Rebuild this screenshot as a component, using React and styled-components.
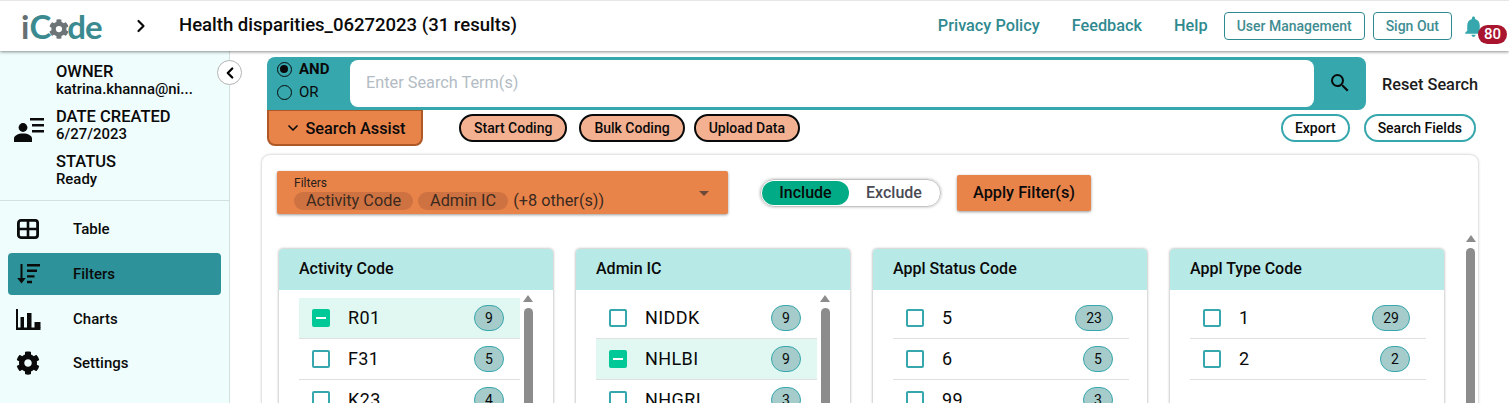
import React from 'react';
import styled, { createGlobalStyle } from 'styled-components';
import { FaCog } from 'react-icons/fa';
import { MdNotifications, MdSearch } from 'react-icons/md';
import { ChevronDown, ChevronLeft, ChevronRight } from 'lucide-react';

const GlobalStyle = createGlobalStyle`
  html, body {
    margin: 0;
    padding: 0;
    background: #fff;
    font-family: Roboto, "Liberation Sans", sans-serif;
    color: #0a0a0a;
  }
  * {
    box-sizing: border-box;
  }
`;

const Page = styled.div`
  display: flex;
  flex-direction: column;
  width: 1509px;
  height: 403px;
  overflow: hidden;
`;

const Header = styled.header`
  position: relative;
  z-index: 2;
  display: flex;
  align-items: center;
  flex: 0 0 51px;
  padding: 0 14px 0 21px;
  background: #fff;
  border-top: 1px solid #e6e6e6;
  box-shadow: 0 1px 3px rgba(0, 0, 0, 0.45);
`;

const Logo = styled.div`
  display: flex;
  align-items: center;
  width: 110px;
  font-family: Lato, sans-serif;
  font-size: 33px;
  font-weight: 700;
  line-height: 40px;
  letter-spacing: -1px;
  color: #3a8a90;
`;

const LogoI = styled.span`
  margin-right: 1px;
  color: #666f73;
`;

const LogoGear = styled.svg`
  width: 20px;
  height: 20px;
  margin: 5px -2px 0 -1px;
`;

const Crumb = styled.div`
  display: flex;
  width: 48px;
`;

const Title = styled.h1`
  flex: 1;
  margin: 0 0 2px;
  font-size: 18.55px;
  font-weight: 500;
`;

const HeaderLink = styled.a`
  margin: 0 ${({ $last }) => ($last ? 0 : 32)}px 2px 0;
  font-size: 16.3px;
  font-weight: 500;
  color: #2f8a90;
`;

const OutlineButton = styled.button`
  height: 28px;
  margin-left: ${({ $gap }) => $gap}px;
  padding: 0 12px;
  border: 1px solid #2f8a90;
  border-radius: 4px;
  background: #fff;
  font: 500 14px Roboto, sans-serif;
  color: #3f8d92;
`;

const Bell = styled.div`
  position: relative;
  display: flex;
  width: 34px;
  margin-left: 9px;
  color: #35a7ad;
`;

const BellBadge = styled.span`
  position: absolute;
  top: 11px;
  left: 17px;
  width: 29px;
  height: 19px;
  border-radius: 10px;
  background: #a9152f;
  font-size: 15px;
  font-weight: 500;
  line-height: 19px;
  text-align: center;
  color: #fff;
`;

const Body = styled.div`
  display: flex;
  flex: 1;
  min-height: 0;
`;

const Sidebar = styled.aside`
  position: relative;
  flex: 0 0 230px;
  background: #f0fdfd;
  border-right: 1px solid #d3e0e2;
`;

const CollapseButton = styled.button`
  position: absolute;
  top: 9px;
  right: -13px;
  display: flex;
  align-items: center;
  justify-content: center;
  width: 25px;
  height: 25px;
  padding: 0;
  border: 1px solid #b5b5b5;
  border-radius: 50%;
  background: #fff;
  color: #000;
`;

const Info = styled.div`
  display: flex;
  align-items: center;
  height: 150px;
  padding: 0 0 0 14px;
  border-bottom: 1px solid #d3e0e2;
`;

const InfoIcon = styled.svg`
  flex: 0 0 31px;
  height: 24px;
  margin: 8px 11px 0 0;
`;

const InfoList = styled.dl`
  display: flex;
  flex-direction: column;
  gap: 9px;
  margin: 0;
  font-size: 16px;
  line-height: 18px;
`;

const InfoName = styled.dt`
  height: 18px;
  font-size: 16.5px;
  font-weight: 500;
`;

const InfoValue = styled.dd`
  margin: -1px 0 1px;
  height: 18px;
  font-size: 14.9px;
  font-weight: 500;
`;

const Nav = styled.nav`
  display: flex;
  flex-direction: column;
  gap: 3px;
  padding: 7px 8px 0;
`;

const NavItem = styled.div`
  display: flex;
  align-items: center;
  height: 42px;
  padding-left: 8px;
  border-radius: 4px;
  background: ${({ $active }) => ($active ? '#2d9299' : 'transparent')};
  font-size: 15px;
  font-weight: 500;
  &:last-child {
    margin-top: -1px;
  }
`;

const NavIcon = styled.span`
  display: flex;
  width: 57px;
`;

const Main = styled.main`
  flex: 1;
  min-width: 0;
  padding: 6px 31px 0 37px;
`;

const SearchRow = styled.div`
  display: flex;
  align-items: center;
`;

const SearchBar = styled.div`
  display: flex;
  align-items: center;
  flex: 0 0 1099px;
  height: 53px;
  padding: 3px 0 3px 10px;
  background: #35a7ad;
  border-radius: 8px 8px 8px 0;
`;

const Operators = styled.div`
  display: flex;
  flex-direction: column;
  gap: 5px;
  flex: 0 0 73px;
  margin-top: -6px;
`;

const Operator = styled.label`
  display: flex;
  align-items: center;
  gap: 7px;
  height: 18px;
  font-size: 15px;
  font-weight: ${({ $on }) => ($on ? 700 : 400)};
`;

const Radio = styled.span`
  position: relative;
  width: 15px;
  height: 15px;
  border: 1.5px solid #0a0a0a;
  border-radius: 50%;
  &::after {
    content: '';
    display: ${({ $on }) => ($on ? 'block' : 'none')};
    width: 8px;
    height: 8px;
    margin: 2px;
    border-radius: 50%;
    background: #0a0a0a;
  }
`;

const SearchInput = styled.div`
  flex: 1;
  display: flex;
  align-items: center;
  align-self: stretch;
  padding: 0 0 2px 16px;
  background: #fff;
  border-radius: 8px;
  font-size: 16.3px;
  color: #b3bcc4;
`;

const SearchIcon = styled.div`
  display: flex;
  justify-content: center;
  flex: 0 0 52px;
  margin-top: -2px;
  color: #0a0a0a;
`;

const ResetSearch = styled.span`
  margin: 2px 0 0 16px;
  font-size: 16.3px;
  font-weight: 500;
  white-space: nowrap;
  color: #1c1c1c;
`;

const ActionRow = styled.div`
  display: flex;
  align-items: flex-start;
`;

const SearchAssist = styled.button`
  display: flex;
  align-items: center;
  justify-content: center;
  gap: 4px;
  width: 156px;
  height: 36px;
  margin-right: 36px;
  padding: 1px 0 0 1px;
  border: 2px solid #ae5826;
  border-top-width: 1px;
  border-radius: 0 0 8px 8px;
  background: #e8834a;
  font: 500 16.3px Roboto, sans-serif;
  color: #0a0a0a;
`;

const Pill = styled.button`
  height: 28px;
  margin: 4px ${({ $gap }) => $gap}px 0 0;
  padding: 0 13px;
  border: 2px solid #0a0a0a;
  border-radius: 14px;
  background: #f4b191;
  font: 500 14px Roboto, sans-serif;
  color: #0a0a0a;
`;

const ExportGroup = styled.div`
  display: flex;
  gap: 14px;
  margin: 4px 2px 0 auto;
`;

const TealPill = styled.button`
  height: 28px;
  padding: 0 12px;
  border: 2px solid #35a7ad;
  border-radius: 14px;
  background: #fff;
  font: 500 14px Roboto, sans-serif;
  color: #0a0a0a;
`;

const Panel = styled.section`
  display: flex;
  flex-direction: column;
  gap: 35px;
  margin: 9px 0 0 -5px;
  height: 300px;
  padding: 16px 3px 0 15px;
  border-radius: 8px;
  box-shadow: 0 0 3px rgba(0, 0, 0, 0.3);
`;

const FilterBar = styled.div`
  display: flex;
  align-items: center;
`;

const FilterSelect = styled.div`
  position: relative;
  flex: 0 0 451px;
  height: 43px;
  margin-right: 32px;
  padding: 6px 17px;
  background: #e8834a;
  border-radius: 2px;
  box-shadow: 0 1px 3px rgba(0, 0, 0, 0.4);
`;

const SelectLabel = styled.div`
  margin-bottom: 3px;
  font-size: 12px;
  line-height: 12px;
  color: #2a2018;
`;

const SelectValues = styled.div`
  display: flex;
  align-items: center;
  gap: 5px;
  font-size: 16.3px;
  line-height: 18px;
  color: #3a2a20;
`;

const SelectChip = styled.span`
  padding: 0 12px;
  border-radius: 9px;
  background: #cf7241;
`;

const SelectArrow = styled.span`
  position: absolute;
  top: 20px;
  right: 19px;
  border-left: 5px solid transparent;
  border-right: 5px solid transparent;
  border-top: 5px solid #6b4a38;
`;

const Toggle = styled.div`
  display: flex;
  flex: 0 0 181px;
  height: 28px;
  margin-right: 16px;
  padding: 1px;
  border: 1px solid #c4c4c4;
  border-radius: 14px;
  box-shadow: 0 0 3px rgba(0, 0, 0, 0.3);
  font-size: 16px;
  font-weight: 500;
`;

const ToggleOption = styled.span`
  display: flex;
  align-items: center;
  justify-content: center;
  width: ${({ $on }) => ($on ? 87 : 90)}px;
  border-radius: 13px;
  background: ${({ $on }) => ($on ? '#00ab85' : 'transparent')};
  color: ${({ $on }) => ($on ? '#0a0a0a' : '#4a4a55')};
`;

const ApplyButton = styled.button`
  width: 134px;
  height: 36px;
  border: none;
  border-radius: 2px;
  background: #e8834a;
  box-shadow: 0 1px 3px rgba(0, 0, 0, 0.4);
  font: 500 16.3px Roboto, sans-serif;
  color: #0a0a0a;
`;

const CardArea = styled.div`
  display: flex;
  min-height: 0;
`;

const CardGrid = styled.div`
  display: flex;
  gap: 23px;
  margin: 0 21px 0 2px;
`;

const Card = styled.article`
  width: 274px;
  height: 200px;
  border-radius: 4px 4px 0 0;
  background: #fff;
  box-shadow: 0 0 3px rgba(0, 0, 0, 0.4);
  overflow: hidden;
`;

const CardTitle = styled.h3`
  display: flex;
  align-items: center;
  height: 41px;
  margin: 0;
  padding: 0 0 2px 20px;
  background: #b7e9e6;
  font-size: 16px;
  font-weight: 500;
`;

const CardBody = styled.div`
  display: flex;
  padding: 8px 0 0 20px;
`;

const RowList = styled.ul`
  flex: 0 0 ${({ $full }) => ($full ? 236 : 221)}px;
  margin: 0;
  padding: 0;
  list-style: none;
`;

const Row = styled.li`
  display: flex;
  align-items: center;
  height: 41px;
  padding: 0 16px 0 13px;
  background: ${({ $on }) => ($on ? '#e0f8f1' : 'transparent')};
  border-bottom: 1px solid #e0e0e0;
  font-size: 18px;
  letter-spacing: 0.4px;
`;

const Check = styled.span`
  display: flex;
  align-items: center;
  justify-content: center;
  flex: 0 0 18px;
  height: 18px;
  margin-right: 18px;
  border: 2px solid #35a7ad;
  border-radius: 2px;
  ${({ $on }) => $on && 'background: #00c896; border-color: #00c896;'}
  &::after {
    content: '';
    display: ${({ $on }) => ($on ? 'block' : 'none')};
    width: 10px;
    height: 2px;
    background: #fff;
  }
`;

const RowLabel = styled.span`
  flex: 1;
  margin-top: -2px;
`;

const Count = styled.span`
  display: flex;
  align-items: center;
  justify-content: center;
  min-width: 30px;
  height: 26px;
  padding: 0 10px;
  border: 1px solid #35a7ad;
  border-radius: 13px;
  background: #a5cccb;
  font-size: 14px;
  letter-spacing: 0;
`;

const ScrollTrack = styled.div`
  display: flex;
  flex-direction: column;
  align-items: center;
  flex: 0 0 ${({ $wide }) => ($wide ? 11 : 9)}px;
  margin: ${({ $outer }) => ($outer ? '-14px 0 0 0' : '-3px 0 0 3px')};
  height: 220px;
`;

const ScrollArrow = styled.span`
  flex: none;
  margin-bottom: 6px;
  border-left: 5px solid transparent;
  border-right: 5px solid transparent;
  border-bottom: 7px solid #8c8c8c;
`;

const ScrollThumb = styled.span`
  flex: 1;
  width: 9px;
  border-radius: 5px;
  background: #8c8c8c;
`;

const TableIcon = () => (
  <svg width="23" height="20" viewBox="0 0 23 20" fill="none" stroke="#0a0a0a">
    <rect x="2.4" y="1.4" width="19.2" height="17.2" rx="2.5" strokeWidth="2.8" />
    <path d="M2 10h20M12 1.5v17" strokeWidth="2.6" />
  </svg>
);

const FiltersIcon = () => (
  <svg width="25" height="20" viewBox="0 0 25 20" fill="#0a0a0a">
    <path d="M4.5 0h2v14h3.2l-4.2 5.5L1.2 14h3.3z" />
    <path d="M11 0h13v2.4H11zM11 5.6h10v2.4H11zM11 11.2h7.5v2.4H11zM11 16.8h5v2.4h-5z" />
  </svg>
);

const ChartsIcon = () => (
  <svg width="25" height="21" viewBox="0 0 25 21" fill="#0a0a0a">
    <path d="M0 0h2v21H0zM2 18.5h22.5V21H2z" />
    <path d="M4.5 8h3.5v11H4.5zM11 4h4.5v15H11zM18.5 13h6v6h-6z" />
  </svg>
);

const ProfileIcon = () => (
  <InfoIcon viewBox="0 0 31 24" fill="#0a0a0a">
    <circle cx="9" cy="9.5" r="4.4" />
    <path d="M0 24v-3.4c0-3 4-5.1 9-5.1s9 2.1 9 5.1V24z" />
    <path d="M16 0h14v2.6H16zM18 6h12v2.6H18zM18 12h12v2.6H18z" />
  </InfoIcon>
);

const filterCards = [
  {
    title: 'Activity Code',
    scroll: true,
    rows: [
      { label: 'R01', count: 9, on: true },
      { label: 'F31', count: 5 },
      { label: 'K23', count: 4 },
    ],
  },
  {
    title: 'Admin IC',
    scroll: true,
    rows: [
      { label: 'NIDDK', count: 9 },
      { label: 'NHLBI', count: 9, on: true },
      { label: 'NHGRI', count: 3 },
    ],
  },
  {
    title: 'Appl Status Code',
    rows: [
      { label: '5', count: 23 },
      { label: '6', count: 5 },
      { label: '99', count: 3 },
    ],
  },
  {
    title: 'Appl Type Code',
    rows: [
      { label: '1', count: 29 },
      { label: '2', count: 2 },
    ],
  },
];

const navItems = [
  { label: 'Table', icon: <TableIcon /> },
  { label: 'Filters', icon: <FiltersIcon />, active: true },
  { label: 'Charts', icon: <ChartsIcon /> },
  { label: 'Settings', icon: <FaCog size={24} color="#0a0a0a" /> },
];

export default function App() {
  return (
    <Page>
      <GlobalStyle />
      <Header>
        <Logo>
          <LogoI>i</LogoI>C
          <LogoGear viewBox="0 0 512 512" fill="#6d7478">
            <path d="M487 316l-43-25a195 195 0 000-70l43-25c5-3 7-9 5-14a251 251 0 00-55-95c-4-4-10-5-15-2l-43 25a190 190 0 00-61-35V25c0-6-4-10-9-11a253 253 0 00-110 0c-5 1-9 5-9 11v50a196 196 0 00-61 35L86 85c-5-3-11-2-15 2a250 250 0 00-55 95c-2 5 0 11 5 14l43 25a195 195 0 000 70l-43 25c-5 3-7 9-5 14 11 36 30 68 55 95 4 4 10 5 15 2l43-25c18 15 39 27 61 35v50c0 6 4 10 9 11 37 8 74 8 110 0 5-1 9-5 9-11v-50c22-8 43-20 61-35l43 25c5 3 11 2 15-2a250 250 0 0055-95c2-5 0-11-5-14zM254 336a80 80 0 110-160 80 80 0 010 160z" />
          </LogoGear>
          de
        </Logo>
        <Crumb>
          <ChevronRight size={20} strokeWidth={2.6} color="#0a0a0a" />
        </Crumb>
        <Title>Health disparities_06272023 (31 results)</Title>
        <HeaderLink>Privacy Policy</HeaderLink>
        <HeaderLink>Feedback</HeaderLink>
        <HeaderLink $last>Help</HeaderLink>
        <OutlineButton $gap={16}>User Management</OutlineButton>
        <OutlineButton $gap={8}>Sign Out</OutlineButton>
        <Bell>
          <MdNotifications size={25} />
          <BellBadge>80</BellBadge>
        </Bell>
      </Header>
      <Body>
        <Sidebar>
          <CollapseButton>
            <ChevronLeft size={18} strokeWidth={3} />
          </CollapseButton>
          <Info>
            <ProfileIcon />
            <InfoList>
              <div>
                <InfoName>OWNER</InfoName>
                <InfoValue>katrina.khanna@ni...</InfoValue>
              </div>
              <div>
                <InfoName>DATE CREATED</InfoName>
                <InfoValue>6/27/2023</InfoValue>
              </div>
              <div>
                <InfoName>STATUS</InfoName>
                <InfoValue>Ready</InfoValue>
              </div>
            </InfoList>
          </Info>
          <Nav>
            {navItems.map((item) => (
              <NavItem key={item.label} $active={item.active}>
                <NavIcon>{item.icon}</NavIcon>
                {item.label}
              </NavItem>
            ))}
          </Nav>
        </Sidebar>
        <Main>
          <SearchRow>
            <SearchBar>
              <Operators>
                <Operator $on>
                  <Radio $on />
                  AND
                </Operator>
                <Operator>
                  <Radio />
                  OR
                </Operator>
              </Operators>
              <SearchInput>Enter Search Term(s)</SearchInput>
              <SearchIcon>
                <MdSearch size={24} />
              </SearchIcon>
            </SearchBar>
            <ResetSearch>Reset Search</ResetSearch>
          </SearchRow>
          <ActionRow>
            <SearchAssist>
              <ChevronDown size={16} strokeWidth={2.5} />
              Search Assist
            </SearchAssist>
            <Pill $gap={12}>Start Coding</Pill>
            <Pill $gap={9}>Bulk Coding</Pill>
            <Pill $gap={0}>Upload Data</Pill>
            <ExportGroup>
              <TealPill>Export</TealPill>
              <TealPill>Search Fields</TealPill>
            </ExportGroup>
          </ActionRow>
          <Panel>
            <FilterBar>
              <FilterSelect>
                <SelectLabel>Filters</SelectLabel>
                <SelectValues>
                  <SelectChip>Activity Code</SelectChip>
                  <SelectChip>Admin IC</SelectChip>
                  (+8 other(s))
                </SelectValues>
                <SelectArrow />
              </FilterSelect>
              <Toggle>
                <ToggleOption $on>Include</ToggleOption>
                <ToggleOption>Exclude</ToggleOption>
              </Toggle>
              <ApplyButton>Apply Filter(s)</ApplyButton>
            </FilterBar>
            <CardArea>
              <CardGrid>
                {filterCards.map((card) => (
                  <Card key={card.title}>
                    <CardTitle>{card.title}</CardTitle>
                    <CardBody>
                      <RowList $full={!card.scroll}>
                        {card.rows.map((row) => (
                          <Row key={row.label} $on={row.on}>
                            <Check $on={row.on} />
                            <RowLabel>{row.label}</RowLabel>
                            <Count>{row.count}</Count>
                          </Row>
                        ))}
                      </RowList>
                      {card.scroll && (
                        <ScrollTrack>
                          <ScrollArrow />
                          <ScrollThumb />
                        </ScrollTrack>
                      )}
                    </CardBody>
                  </Card>
                ))}
              </CardGrid>
              <ScrollTrack $outer $wide>
                <ScrollArrow />
                <ScrollThumb />
              </ScrollTrack>
            </CardArea>
          </Panel>
        </Main>
      </Body>
    </Page>
  );
}
